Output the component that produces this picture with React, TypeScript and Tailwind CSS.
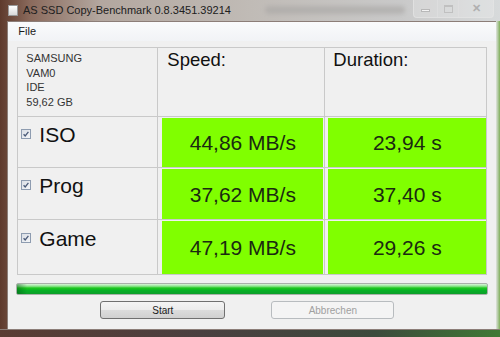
import React from "react";

const rows = [
  { label: "ISO", speed: "44,86 MB/s", time: "23,94 s", pt: "pt-[7px]" },
  { label: "Prog", speed: "37,62 MB/s", time: "37,40 s", pt: "pt-[7px]" },
  { label: "Game", speed: "47,19 MB/s", time: "29,26 s", pt: "pt-[8px]" },
];

const CheckBox = () => (
  <svg width="10" height="10" viewBox="0 0 10 10" className="shrink-0">
    <defs>
      <linearGradient id="cbg" x1="0" y1="0" x2="1" y2="1">
        <stop offset="0" stopColor="#d8dde4" />
        <stop offset="1" stopColor="#f6f7f9" />
      </linearGradient>
    </defs>
    <rect x="0.5" y="0.5" width="9" height="9" fill="url(#cbg)" stroke="#8e9cb0" />
    <path d="M2.6 5.2 L4.2 7 L7.4 2.8" fill="none" stroke="#4a5a78" strokeWidth="1.3" />
  </svg>
);

const App = () => {
  return (
    <div
      className="w-[500px] h-[337px] flex flex-col overflow-hidden bg-[linear-gradient(to_right,#5e3a2c_0%,#8a6a5c_6%,#b3a79f_20%,#c0bbb6_50%,#c9c9c9_80%,#d7dadb_100%)]"
      style={{ fontFamily: '"Liberation Sans", Arial, sans-serif' }}
    >
      {/* title bar */}
      <div className="h-[21px] flex items-start relative">
        <div className="flex items-center h-[21px] pl-[8px] gap-[5px]">
          <div className="w-[10px] h-[11px] bg-[linear-gradient(to_bottom,#ffffff,#d8d8d8)] border border-[#9a9a9a]" />
          <span className="text-[11px] text-[#202020] leading-none">AS SSD Copy-Benchmark 0.8.3451.39214</span>
        </div>
        <div className="absolute left-[265px] top-[6px] w-[140px] h-[8px] bg-[#a8a6a4] opacity-60 blur-[2px] rounded" />
        <div className="absolute left-[413px] top-0 flex h-[18px] border border-t-0 border-[#e4e4e4]/70 rounded-b-[4px] overflow-hidden bg-white/20">
          <div className="w-[24px] flex items-center justify-center border-r border-[#e0e0e0]/70">
            <div className="w-[9px] h-[3px] border border-[#b8b8b8] bg-white/70 mt-[3px]" />
          </div>
          <div className="w-[21px] flex items-center justify-center border-r border-[#e0e0e0]/70">
            <div className="w-[9px] h-[8px] border border-[#c0c0c0] border-t-2" />
          </div>
          <div className="w-[34px] flex items-center justify-center text-[#b0b0b0] text-[11px] font-bold">
            ✕
          </div>
        </div>
      </div>

      <div className="flex-1 flex">
        <div className="w-[8px]" />
        {/* client area */}
        <div className="flex-1 flex flex-col bg-[#f0f0f0] border-l border-t border-[#8c7e78]">
          <div className="h-[19px] flex items-center pl-[10px] bg-[linear-gradient(to_bottom,#fafbfc,#f1f3f6)]">
            <span className="text-[11px] text-[#1a1a1a]">File</span>
          </div>

          <div className="flex flex-col px-[8px] pt-[6px]">
            {/* table */}
            <div className="ml-px grid grid-cols-[139px_166px_161px] grid-rows-[68px_50px_51px_54px] gap-px bg-[#c9c9c9] border border-[#c9c9c9] w-[470px]">
              <div className="bg-[#f0f0f0] pl-[8px] pt-[3px] text-[11px] leading-[14.6px] text-[#333]">
                <div>SAMSUNG</div>
                <div>VAM0</div>
                <div>IDE</div>
                <div>59,62 GB</div>
              </div>
              <div className="bg-[#f0f0f0] pl-[9px] pt-[3px] text-[18.5px] leading-none text-[#111]">Speed:</div>
              <div className="bg-[#f0f0f0] pl-[8px] pt-[3px] text-[18.5px] leading-none text-[#111]">Duration:</div>

              {rows.map((r, i) => (
                <React.Fragment key={i}>
                  <div className={`bg-[#f0f0f0] flex items-start pl-[3px] gap-[8px] ${r.pt}`}>
                    <div className="mt-[5px]">
                      <CheckBox />
                    </div>
                    <span className="text-[21px] leading-none text-[#111]">{r.label}</span>
                  </div>
                  <div className="bg-[#f0f0f0] pl-[4px] pr-px pt-[1px] flex">
                    <div className="flex-1 bg-[#80ff00] flex items-center justify-center text-[21px] leading-none text-[#1a2a10]">
                      {r.speed}
                    </div>
                  </div>
                  <div className="bg-[#f0f0f0] pl-[3px] pt-[1px] flex">
                    <div className="flex-1 bg-[#80ff00] flex items-center justify-center text-[21px] leading-none text-[#1a2a10]">
                      {r.time}
                    </div>
                  </div>
                </React.Fragment>
              ))}
            </div>

            {/* progress bar */}
            <div className="mt-[8px] h-[12px] w-[472px] border border-[#a9b0a9] rounded-[2px] overflow-hidden flex bg-[linear-gradient(to_bottom,#d9f5d9_0%,#8fe48f_22%,#1ec81e_40%,#06b025_65%,#0d9e2a_100%)]">
              <div className="w-[10px] h-full bg-[linear-gradient(to_right,rgba(0,80,20,0.45),rgba(0,80,20,0))]" />
            </div>

            {/* buttons */}
            <div className="mt-[6px] flex pl-[84px] gap-[46px]">
              <div className="w-[125px] h-[18px] rounded-[3px] border border-[#707070] bg-[linear-gradient(to_bottom,#f4f4f4_0%,#ececec_48%,#dcdcdc_52%,#d0d0d0_100%)] flex items-center justify-center text-[10px] text-[#1a1a1a]">
                Start
              </div>
              <div className="w-[123px] h-[18px] rounded-[3px] border border-[#b8bcbf] bg-[#f4f4f4] flex items-center justify-center text-[10px] text-[#a0a0a0]">
                Abbrechen
              </div>
            </div>
          </div>
        </div>
        <div className="w-[4px] bg-[linear-gradient(to_right,#dfe3df,#7fae5a)]" />
      </div>

      {/* bottom frame */}
      <div className="h-[8px] bg-[linear-gradient(to_right,#5a3c33_0%,#4a4040_40%,#3c4a3c_75%,#3f7a35_100%)] border-t border-[#8c7e78]" />
    </div>
  );
};

export default App;
